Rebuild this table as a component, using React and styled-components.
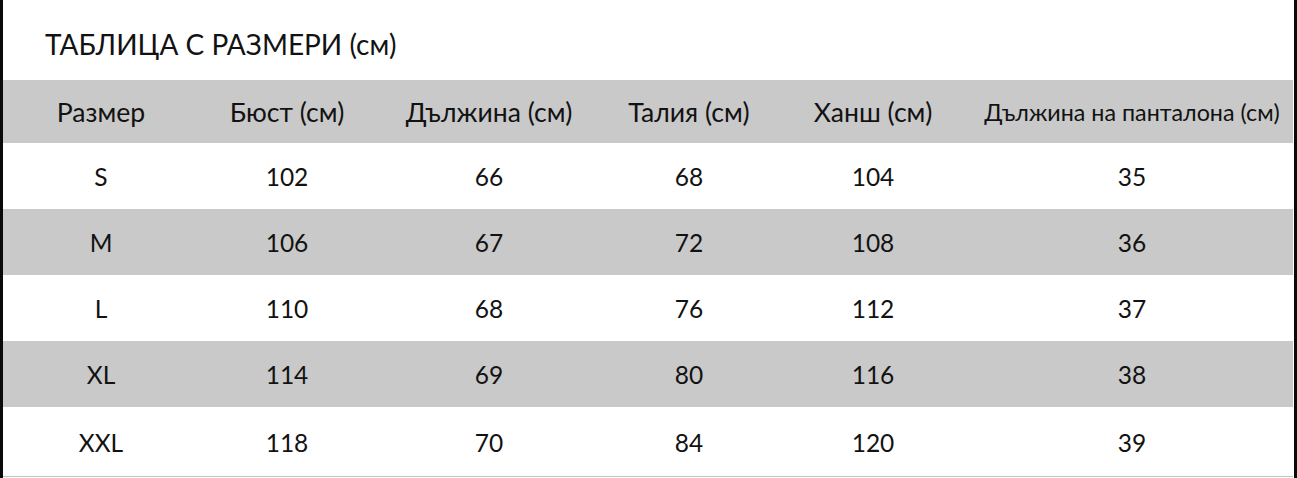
import React from 'react'
import styled, { createGlobalStyle } from 'styled-components'

const columns = [
    { key: 'size', title: 'Размер' },
    { key: 'bust', title: 'Бюст (см)' },
    { key: 'length', title: 'Дължина (см)' },
    { key: 'waist', title: 'Талия (см)' },
    { key: 'hips', title: 'Ханш (см)' },
    { key: 'pants', title: 'Дължина на панталона (см)', small: true },
]

const rows = [
    { size: 'S', bust: 102, length: 66, waist: 68, hips: 104, pants: 35 },
    { size: 'M', bust: 106, length: 67, waist: 72, hips: 108, pants: 36 },
    { size: 'L', bust: 110, length: 68, waist: 76, hips: 112, pants: 37 },
    { size: 'XL', bust: 114, length: 69, waist: 80, hips: 116, pants: 38 },
    { size: 'XXL', bust: 118, length: 70, waist: 84, hips: 120, pants: 39 },
]

function App() {
    return (
        <>
            <GlobalStyle />
            <StFrame>
                <StTitle>ТАБЛИЦА С РАЗМЕРИ (см)</StTitle>
                <StTable>
                    <StRow $shaded $header>
                        {columns.map((col) => (
                            <StHeadCell key={col.key} $small={col.small}>{col.title}</StHeadCell>
                        ))}
                    </StRow>
                    {rows.map((row, i) => (
                        <StRow key={row.size} $shaded={i % 2 === 1}>
                            {columns.map((col) => (
                                <StCell key={col.key}>{row[col.key]}</StCell>
                            ))}
                        </StRow>
                    ))}
                </StTable>
            </StFrame>
        </>
    )
}

const GlobalStyle = createGlobalStyle`
    html, body {
        margin: 0;
        padding: 0;
        background: #ffffff;
    }
    body {
        font-family: Lato, "Noto Sans", sans-serif;
        color: #121212;
    }
`

const StFrame = styled.div`
    box-sizing: border-box;
    width: 1297px;
    height: 478px;
    padding-bottom: 1px;
    border-left: 3px solid #0a0a0a;
    border-right: 3px solid #0a0a0a;
    display: flex;
    flex-direction: column;
    background: #ffffff;
`

const StTitle = styled.h1`
    margin: 0;
    height: 80px;
    flex-shrink: 0;
    box-sizing: border-box;
    padding: 28px 0 0 42px;
    font-size: 28px;
    font-weight: 400;
    line-height: 32px;
`

const StTable = styled.div`
    flex: 1;
    display: flex;
    flex-direction: column;
    margin-right: 1px;
    border-bottom: 1px solid #c4c4c4;
`

const StRow = styled.div`
    display: grid;
    grid-template-columns: 196px 176px 228px 172px 196px 1fr;
    align-items: center;
    height: ${(props) => (props.$header ? '63px' : '66px')};
    flex-shrink: 0;
    background: ${(props) => (props.$shaded ? '#c9c9c9' : '#ffffff')};

    &:last-child {
        flex: 1;
    }
`

const StHeadCell = styled.div`
    text-align: center;
    font-size: ${(props) => (props.$small ? '23.3px' : '26.6px')};
    white-space: nowrap;
    padding-top: 1px;
`

const StCell = styled.div`
    text-align: center;
    font-size: 24.5px;
    white-space: nowrap;
    padding-top: 1px;
`

export default App
